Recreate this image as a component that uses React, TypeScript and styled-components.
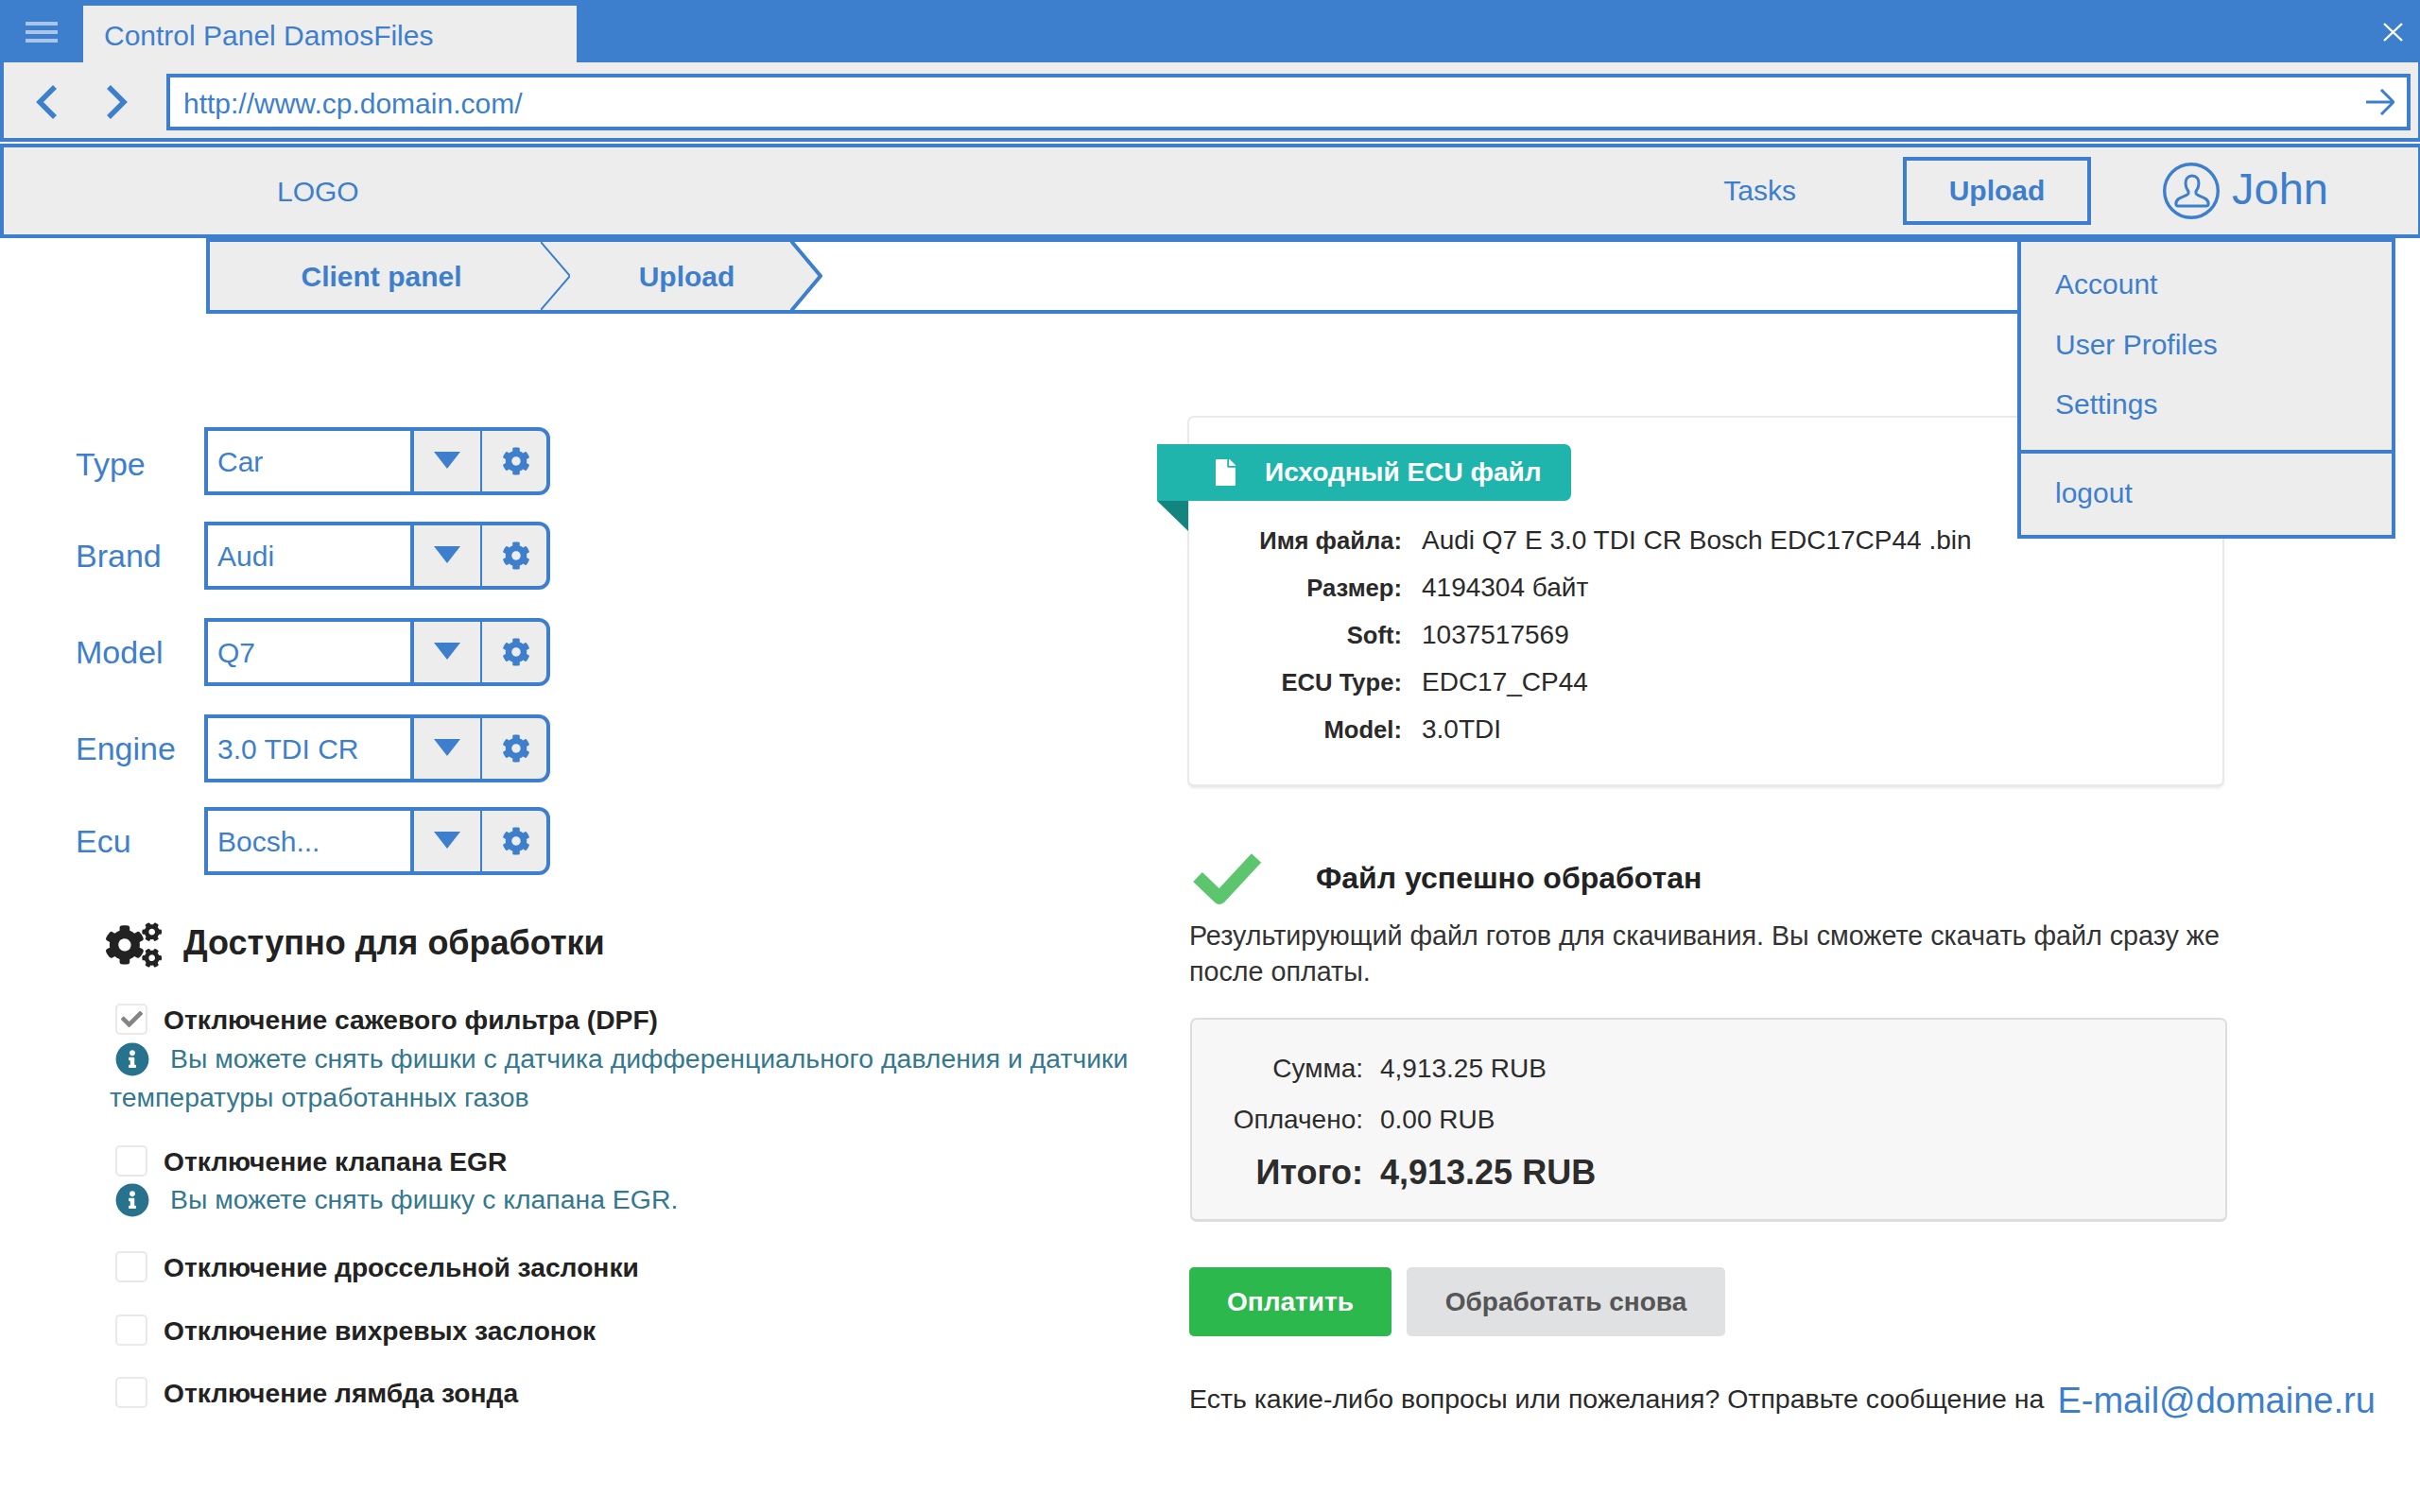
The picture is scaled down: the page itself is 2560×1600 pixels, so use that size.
import React from "react";
import styled, { createGlobalStyle } from "styled-components";
import { FaCog, FaCogs, FaInfoCircle, FaFile, FaCheck } from "react-icons/fa";

const BLUE = "#3e7fcd";
const GRAY = "#ededed";

const Global = createGlobalStyle`
  html, body { margin: 0; padding: 0; background: #fff; }
  body { font-family: "Liberation Sans", Arial, sans-serif; color: #222; }
  * { box-sizing: border-box; }
`;

const Page = styled.div`
  position: relative;
  width: 2560px;
  height: 1600px;
  overflow: hidden;
`;

const TitleBar = styled.header`
  display: flex;
  height: 66px;
  background: ${BLUE};
`;
const MenuButton = styled.div`
  width: 88px;
  padding: 23px 27px 0;
  display: flex;
  flex-direction: column;
  gap: 5px;
`;
const MenuBar = styled.span`
  display: block;
  width: 34px;
  height: 4px;
  background: #a9c6ea;
`;
const Tab = styled.div`
  width: 522px;
  height: 60px;
  margin-top: 6px;
  padding-left: 22px;
  background: ${GRAY};
  color: ${BLUE};
  font-size: 30px;
  line-height: 64px;
`;
const CloseIcon = styled.svg`
  margin: 24px 18px 0 auto;
  width: 21px;
  height: 20px;
`;

const AddressBar = styled.div`
  display: flex;
  height: 84px;
  padding: 12px 8px 0 0;
  background: ${GRAY};
  border-left: 4px solid ${BLUE};
  border-right: 2px solid ${BLUE};
  border-bottom: 4px solid ${BLUE};
`;
const NavArrows = styled.div`
  display: flex;
  width: 172px;
  padding: 12px 0 0 34px;
  gap: 51px;
`;
const AddressField = styled.div`
  flex: 1;
  display: flex;
  align-items: center;
  justify-content: space-between;
  height: 60px;
  padding: 0 13px 0 14px;
  background: #fff;
  border: 4px solid ${BLUE};
  color: ${BLUE};
  font-size: 30px;
`;
const AddressText = styled.span`
  padding-top: 3px;
`;

const NavBar = styled.nav`
  display: flex;
  align-items: center;
  height: 100px;
  margin-top: 2px;
  background: ${GRAY};
  border: 4px solid ${BLUE};
  border-right-width: 2px;
  color: ${BLUE};
  font-size: 30px;
`;
const Logo = styled.div`
  margin-left: 289px;
  margin-top: 2px;
`;
const NavLink = styled.div`
  margin-left: auto;
`;
const UploadButton = styled.div`
  display: flex;
  align-items: center;
  justify-content: center;
  width: 199px;
  height: 72px;
  margin-left: 113px;
  border: 4px solid ${BLUE};
  font-weight: 700;
`;
const UserBox = styled.div`
  display: flex;
  align-items: center;
  gap: 13px;
  width: 346px;
  padding-left: 76px;
  font-size: 47px;
`;
const UserName = styled.span`
  margin-top: -5px;
`;

const Breadcrumb = styled.div`
  display: flex;
  height: 80px;
  margin: 0 426px 0 218px;
  border: solid ${BLUE};
  border-width: 4px 0 4px 4px;
  color: ${BLUE};
  font-size: 30px;
  font-weight: 700;
`;
const Crumb = styled.div<{ $w: number; $pl: number }>`
  display: flex;
  align-items: center;
  justify-content: center;
  width: ${(p) => p.$w}px;
  padding: 2px 0 0 ${(p) => p.$pl}px;
  background: ${GRAY};
`;
const CrumbArrow = styled.svg<{ $filled?: boolean }>`
  display: block;
  flex: none;
  background: ${(p) => (p.$filled ? GRAY : "transparent")};
`;

const Dropdown = styled.div`
  position: absolute;
  z-index: 2;
  left: 2134px;
  top: 252px;
  width: 400px;
  height: 318px;
  background: ${GRAY};
  border: 4px solid ${BLUE};
  color: ${BLUE};
  font-size: 30px;
`;
const DropdownItems = styled.div`
  height: 224px;
  padding: 20px 0 0 36px;
  border-bottom: 4px solid ${BLUE};
`;
const DropdownItem = styled.div<{ $h: number }>`
  height: ${(p) => p.$h}px;
  line-height: 50px;
`;
const DropdownLogout = styled.div`
  padding: 17px 0 0 36px;
  line-height: 50px;
`;

const Main = styled.main`
  display: flex;
`;
const LeftColumn = styled.section`
  width: 1258px;
  padding: 120px 0 0 80px;
`;
const FormRow = styled.div<{ $mb: number }>`
  display: flex;
  align-items: center;
  margin-bottom: ${(p) => p.$mb}px;
`;
const FieldLabel = styled.label<{ $pt: number }>`
  width: 136px;
  padding-top: ${(p) => p.$pt}px;
  color: ${BLUE};
  font-size: 34px;
`;
const SelectBox = styled.div`
  display: flex;
  width: 366px;
  height: 72px;
  border: 4px solid ${BLUE};
  border-radius: 0 12px 12px 0;
  overflow: hidden;
  background: ${GRAY};
`;
const SelectValue = styled.div`
  display: flex;
  align-items: center;
  width: 218px;
  padding: 1px 0 0 10px;
  background: #fff;
  border-right: 4px solid ${BLUE};
  color: ${BLUE};
  font-size: 30px;
`;
const CaretCell = styled.div`
  display: flex;
  justify-content: center;
  width: 72px;
  padding-top: 22px;
  border-right: 2px solid ${BLUE};
`;
const Caret = styled.span`
  width: 0;
  height: 0;
  border-style: solid;
  border-width: 18px 14px 0;
  border-color: ${BLUE} transparent transparent;
`;
const CogCell = styled.div`
  display: flex;
  align-items: center;
  justify-content: center;
  flex: 1;
  padding-left: 3px;
  color: ${BLUE};
  font-size: 30px;
`;

const SectionHead = styled.h2`
  display: flex;
  align-items: center;
  gap: 23px;
  height: 54px;
  margin: 47px 0 35px 32px;
  color: #222;
  font-size: 36px;
  font-weight: 700;
  svg {
    width: 59px;
    height: 54px;
  }
`;
const SectionTitle = styled.span`
  margin-top: -5px;
`;
const CheckRow = styled.div<{ $mt?: number }>`
  display: flex;
  align-items: center;
  gap: 18px;
  height: 33px;
  margin: ${(p) => p.$mt ?? 0}px 0 0 42px;
  font-size: 28.2px;
  font-weight: 700;
  color: #222;
`;
const CheckText = styled.span`
  padding-top: 2px;
  margin-left: -1px;
`;
const CheckBox = styled.span`
  display: flex;
  align-items: center;
  justify-content: center;
  flex: none;
  width: 34px;
  height: 33px;
  background: #fff;
  border: 2px solid #e9e9e9;
  border-radius: 5px;
  color: #848484;
  font-size: 23px;
`;
const Hint = styled.p<{ $mt: number }>`
  width: 1090px;
  margin: ${(p) => p.$mt}px 0 0 36px;
  color: #33788f;
  font-size: 28.4px;
  line-height: 41px;
  svg {
    width: 36px;
    height: 36px;
    margin: 0 22px 0 6px;
    vertical-align: -9px;
    color: #27728c;
  }
`;

const RightColumn = styled.section`
  width: 1100px;
  padding-top: 108px;
`;
const FileCard = styled.div`
  position: relative;
  width: 1097px;
  height: 393px;
  margin-left: -2px;
  padding-top: 105px;
  background: #fff;
  border: 2px solid #e9e9e9;
  border-bottom-width: 3px;
  border-radius: 7px;
  box-shadow: 0 2px 2px rgba(0, 0, 0, 0.05);
`;
const Ribbon = styled.div`
  position: absolute;
  left: -34px;
  top: 28px;
  display: flex;
  align-items: center;
  gap: 29px;
  width: 438px;
  height: 60px;
  padding-left: 60px;
  background: #1fb5ad;
  border-radius: 0 7px 7px 0;
  color: #fff;
  font-size: 28px;
  font-weight: 700;
  svg {
    width: 25px;
    height: 28px;
  }
`;
const RibbonFold = styled.span`
  position: absolute;
  left: 0;
  top: 60px;
  width: 0;
  height: 0;
  border-style: solid;
  border-width: 0 33px 32px 0;
  border-color: transparent #14857e transparent transparent;
`;
const InfoRow = styled.div`
  display: grid;
  grid-template-columns: 225px 1fr;
  column-gap: 21px;
  font-size: 28px;
  line-height: 50px;
  color: #2a2a2a;
`;
const InfoLabel = styled.span`
  text-align: right;
  font-size: 25.6px;
  font-weight: 700;
`;

const SuccessHead = styled.div`
  display: flex;
  align-items: center;
  gap: 57px;
  height: 57px;
  margin: 68px 0 0 3px;
  color: #222;
  font-size: 32px;
  font-weight: 700;
`;
const Paragraph = styled.p`
  width: 1098px;
  margin: 13px 0 0;
  color: #333;
  font-size: 28.7px;
  line-height: 38px;
`;
const TotalsBox = styled.div`
  width: 1097px;
  height: 216px;
  margin: 30px 0 0 1px;
  padding-top: 25px;
  background: #f7f7f7;
  border: 2px solid #dddddd;
  border-bottom-width: 3px;
  border-radius: 7px;
`;
const TotalRow = styled.div<{ $big?: boolean }>`
  display: grid;
  grid-template-columns: 181px 1fr;
  column-gap: 18px;
  color: #2c2c2c;
  font-size: ${(p) => (p.$big ? 36 : 28)}px;
  font-weight: ${(p) => (p.$big ? 700 : 400)};
  line-height: ${(p) => (p.$big ? 57 : 54)}px;
  span:first-child {
    text-align: right;
  }
`;
const ButtonRow = styled.div`
  display: flex;
  gap: 16px;
  margin-top: 48px;
`;
const ActionButton = styled.div<{ $primary?: boolean }>`
  display: flex;
  align-items: center;
  justify-content: center;
  width: ${(p) => (p.$primary ? 214 : 337)}px;
  height: 73px;
  border-radius: 5px;
  background: ${(p) => (p.$primary ? "#2db84d" : "#e0e1e3")};
  color: ${(p) => (p.$primary ? "#fff" : "#555")};
  font-size: 28px;
  font-weight: 700;
`;
const FooterLine = styled.div`
  display: flex;
  align-items: center;
  gap: 14px;
  width: 1300px;
  margin-top: 43px;
  color: #2a2a2a;
  font-size: 28.5px;
  white-space: nowrap;
`;
const Email = styled.a`
  padding-top: 4px;
  color: ${BLUE};
  font-size: 38px;
`;

const selects = [
  { label: "Type", value: "Car", mb: 28, pt: 6 },
  { label: "Brand", value: "Audi", mb: 30, pt: 0 },
  { label: "Model", value: "Q7", mb: 30, pt: 0 },
  { label: "Engine", value: "3.0 TDI CR", mb: 26, pt: 0 },
  { label: "Ecu", value: "Bocsh...", mb: 0, pt: 0 },
];

const fileInfo = [
  ["Имя файла:", "Audi Q7 E 3.0 TDI CR Bosch EDC17CP44 .bin"],
  ["Размер:", "4194304 байт"],
  ["Soft:", "1037517569"],
  ["ECU Type:", "EDC17_CP44"],
  ["Model:", "3.0TDI"],
];

export default function App() {
  return (
    <Page>
      <Global />
      <TitleBar>
        <MenuButton>
          <MenuBar />
          <MenuBar />
          <MenuBar />
        </MenuButton>
        <Tab>Control Panel DamosFiles</Tab>
        <CloseIcon viewBox="0 0 21 20">
          <path d="M1 1 20 19M20 1 1 19" stroke="#fff" strokeWidth="2.4" fill="none" />
        </CloseIcon>
      </TitleBar>

      <AddressBar>
        <NavArrows>
          <svg width="23" height="36" viewBox="0 0 23 36">
            <path d="M20 2 4 18l16 16" stroke={BLUE} strokeWidth="5.5" fill="none" />
          </svg>
          <svg width="23" height="36" viewBox="0 0 23 36">
            <path d="M3 2l16 16L3 34" stroke={BLUE} strokeWidth="5.5" fill="none" />
          </svg>
        </NavArrows>
        <AddressField>
          <AddressText>http://www.cp.domain.com/</AddressText>
          <svg width="30" height="28" viewBox="0 0 30 28">
            <path d="M0 14h28M16 1l13 13-13 13" stroke={BLUE} strokeWidth="3" fill="none" />
          </svg>
        </AddressField>
      </AddressBar>

      <NavBar>
        <Logo>LOGO</Logo>
        <NavLink>Tasks</NavLink>
        <UploadButton>Upload</UploadButton>
        <UserBox>
          <svg width="60" height="62" viewBox="0 0 60 62">
            <circle cx="30" cy="31" r="28.300" stroke={BLUE} strokeWidth="3.400" fill="none" />
            <path
              d="M31 15c-4.500 0-7 3.500-7 8 0 4 1.500 6.500 3 8.500v2c0 2.500-7 3-10.500 6-2 1.700-3 4.500-2.500 6.500.2.800.8 1 1.500 1h31c.7 0 1.300-.2 1.500-1 .5-2-.5-4.800-2.500-6.500-3.500-3-10.500-3.500-10.500-6v-2c1.500-2 3-4.500 3-8.500 0-4.500-2.500-8-7-8z"
              stroke={BLUE}
              strokeWidth="3"
              strokeLinejoin="round"
              fill="none"
            />
          </svg>
          <UserName>John</UserName>
        </UserBox>
      </NavBar>

      <Breadcrumb>
        <Crumb $w={350} $pl={13}>Client panel</Crumb>
        <CrumbArrow $filled width="31" height="72" viewBox="0 0 31 72">
          <path d="M0 0l31 36L0 72" stroke={BLUE} strokeWidth="2" fill="none" />
        </CrumbArrow>
        <Crumb $w={233} $pl={14}>Upload</Crumb>
        <CrumbArrow width="34" height="72" viewBox="0 0 34 72">
          <path d="M0 0l32 36L0 72z" fill={GRAY} />
          <path d="M0 -2l32 38L0 74" stroke={BLUE} strokeWidth="4" fill="none" />
        </CrumbArrow>
      </Breadcrumb>

      <Dropdown>
        <DropdownItems>
          <DropdownItem $h={64}>Account</DropdownItem>
          <DropdownItem $h={63}>User Profiles</DropdownItem>
          <DropdownItem $h={60}>Settings</DropdownItem>
        </DropdownItems>
        <DropdownLogout>logout</DropdownLogout>
      </Dropdown>

      <Main>
        <LeftColumn>
          {selects.map((s) => (
            <FormRow key={s.label} $mb={s.mb}>
              <FieldLabel $pt={s.pt}>{s.label}</FieldLabel>
              <SelectBox>
                <SelectValue>{s.value}</SelectValue>
                <CaretCell>
                  <Caret />
                </CaretCell>
                <CogCell>
                  <FaCog />
                </CogCell>
              </SelectBox>
            </FormRow>
          ))}

          <SectionHead>
            <FaCogs />
            <SectionTitle>Доступно для обработки</SectionTitle>
          </SectionHead>

          <CheckRow $mt={2}>
            <CheckBox>
              <FaCheck />
            </CheckBox>
            <CheckText>Отключение сажевого фильтра (DPF)</CheckText>
          </CheckRow>
          <Hint $mt={5}>
            <FaInfoCircle />
            Вы можете снять фишки с датчика дифференциального давления и датчики температуры
            отработанных газов
          </Hint>
          <CheckRow $mt={30}>
            <CheckBox />
            <CheckText>Отключение клапана EGR</CheckText>
          </CheckRow>
          <Hint $mt={4}>
            <FaInfoCircle />
            Вы можете снять фишку с клапана EGR.
          </Hint>
          <CheckRow $mt={34}>
            <CheckBox />
            <CheckText>Отключение дроссельной заслонки</CheckText>
          </CheckRow>
          <CheckRow $mt={34}>
            <CheckBox />
            <CheckText>Отключение вихревых заслонок</CheckText>
          </CheckRow>
          <CheckRow $mt={33}>
            <CheckBox />
            <CheckText>Отключение лямбда зонда</CheckText>
          </CheckRow>
        </LeftColumn>

        <RightColumn>
          <FileCard>
            <Ribbon>
              <RibbonFold />
              <FaFile />
              Исходный ECU файл
            </Ribbon>
            {fileInfo.map(([k, v]) => (
              <InfoRow key={k}>
                <InfoLabel>{k}</InfoLabel>
                <span>{v}</span>
              </InfoRow>
            ))}
          </FileCard>

          <SuccessHead>
            <svg width="74" height="57" viewBox="0 0 74 57">
              <path d="M6 27l23 22L68 7" stroke="#5dc56d" strokeWidth="14" strokeLinejoin="round" fill="none" />
            </svg>
            Файл успешно обработан
          </SuccessHead>
          <Paragraph>
            Результирующий файл готов для скачивания. Вы сможете скачать файл сразу же после оплаты.
          </Paragraph>

          <TotalsBox>
            <TotalRow>
              <span>Сумма:</span>
              <span>4,913.25 RUB</span>
            </TotalRow>
            <TotalRow>
              <span>Оплачено:</span>
              <span>0.00 RUB</span>
            </TotalRow>
            <TotalRow $big>
              <span>Итого:</span>
              <span>4,913.25 RUB</span>
            </TotalRow>
          </TotalsBox>

          <ButtonRow>
            <ActionButton $primary>Оплатить</ActionButton>
            <ActionButton>Обработать снова</ActionButton>
          </ButtonRow>

          <FooterLine>
            <span>Есть какие-либо вопросы или пожелания? Отправьте сообщение на</span>
            <Email>E-mail@domaine.ru</Email>
          </FooterLine>
        </RightColumn>
      </Main>
    </Page>
  );
}
